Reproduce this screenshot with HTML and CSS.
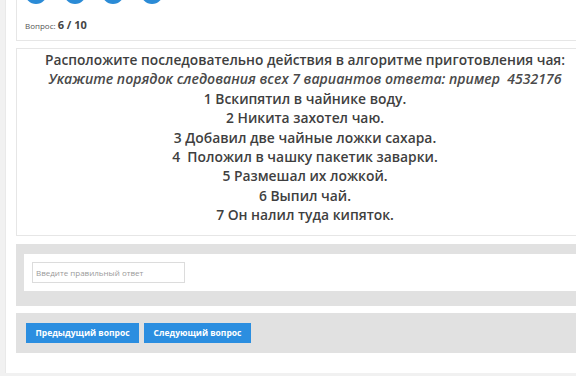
FILE: index.html
```html
<!DOCTYPE html>
<html lang="ru">
<head>
<meta charset="utf-8">
<link rel="stylesheet" href="styles.css">
</head>
<body>
<div class="wrap">
  <div class="card head-card">
    <div class="dots">
      <span class="dot"></span><span class="dot"></span><span class="dot"></span><span class="dot"></span>
    </div>
    <div class="counter">Вопрос: <b>6 / 10</b></div>
  </div>

  <div class="card question">
    <p class="title">Расположите последовательно действия в алгоритме приготовления чая:</p>
    <p class="hint">Укажите порядок следования всех 7 вариантов ответа: пример&nbsp; 4532176</p>
    <p>1 Вскипятил в чайнике воду.</p>
    <p>2 Никита захотел чаю.</p>
    <p>3 Добавил две чайные ложки сахара.</p>
    <p>4&nbsp; Положил в чашку пакетик заварки.</p>
    <p>5 Размешал их ложкой.</p>
    <p>6 Выпил чай.</p>
    <p>7 Он налил туда кипяток.</p>
  </div>

  <div class="answer">
    <div class="answer-inner">
      <input class="answer-input" type="text" placeholder="Введите правильный ответ">
    </div>
  </div>

  <div class="nav">
    <button class="btn prev">Предыдущий вопрос</button>
    <button class="btn next">Следующий вопрос</button>
  </div>
</div>
</body>
</html>
```

FILE: styles.css
```css
html, body {
  margin: 0;
  padding: 0;
}
body {
  background: #f1f1f1;
  overflow: hidden;
  width: 576px;
  height: 376px;
  font-family: "Open Sans", "Noto Sans", sans-serif;
}
.wrap {
  margin-top: -20px;
  margin-left: 5px;
  width: 578px;
  background: #ffffff;
  border-left: 1px solid #e9e9e9;
  padding: 0 10px 20px 10px;
}
.card {
  border: 1px solid #e6e6e6;
  background: #fff;
}
.head-card {
  padding: 1px 0 8px 8px;
}
.dots {
  display: flex;
  gap: 16.5px;
}
.dot {
  width: 22px;
  height: 22px;
  border-radius: 50%;
  background: #2b8bd6;
}
.counter {
  margin-top: 15px;
  font-size: 8px;
  line-height: 12px;
  color: #555;
}
.counter b {
  font-size: 11px;
  font-weight: 700;
  color: #444;
}
.question {
  margin-top: 7px;
  padding: 1px 0 10px 0;
  text-align: center;
  color: #3f3f3f;
}
.question p {
  margin: 0;
  font-size: 13.85px;
  line-height: 19.4px;
  font-weight: 600;
}
.question .title {
  font-size: 13.75px;
}
.question .hint {
  font-style: italic;
  font-weight: 600;
  font-size: 14.1px;
  color: #4a4a4a;
}
.answer {
  margin-top: 8px;
  background: #e1e1e1;
  padding: 10px 8px 15px 8px;
}
.answer-inner {
  background: #fff;
  padding: 8px;
}
.answer-input {
  display: block;
  box-sizing: border-box;
  width: 153px;
  height: 21px;
  border: 1px solid #dcdcdc;
  padding: 0 3px;
  font-family: "Open Sans", sans-serif;
  font-size: 8px;
  color: #555;
  background: #fff;
  outline: none;
}
.answer-input::placeholder {
  color: #9a9a9a;
}
.nav {
  margin-top: 7px;
  background: #e1e1e1;
  padding: 10px;
  display: flex;
  gap: 5px;
}
.btn {
  height: 20px;
  border: none;
  background: #2b8ee0;
  color: #fff;
  font-family: "Open Sans", sans-serif;
  font-weight: 700;
  font-size: 8.5px;
  padding: 0;
  cursor: pointer;
}
.btn.prev { width: 113px; }
.btn.next { width: 107px; }
```
